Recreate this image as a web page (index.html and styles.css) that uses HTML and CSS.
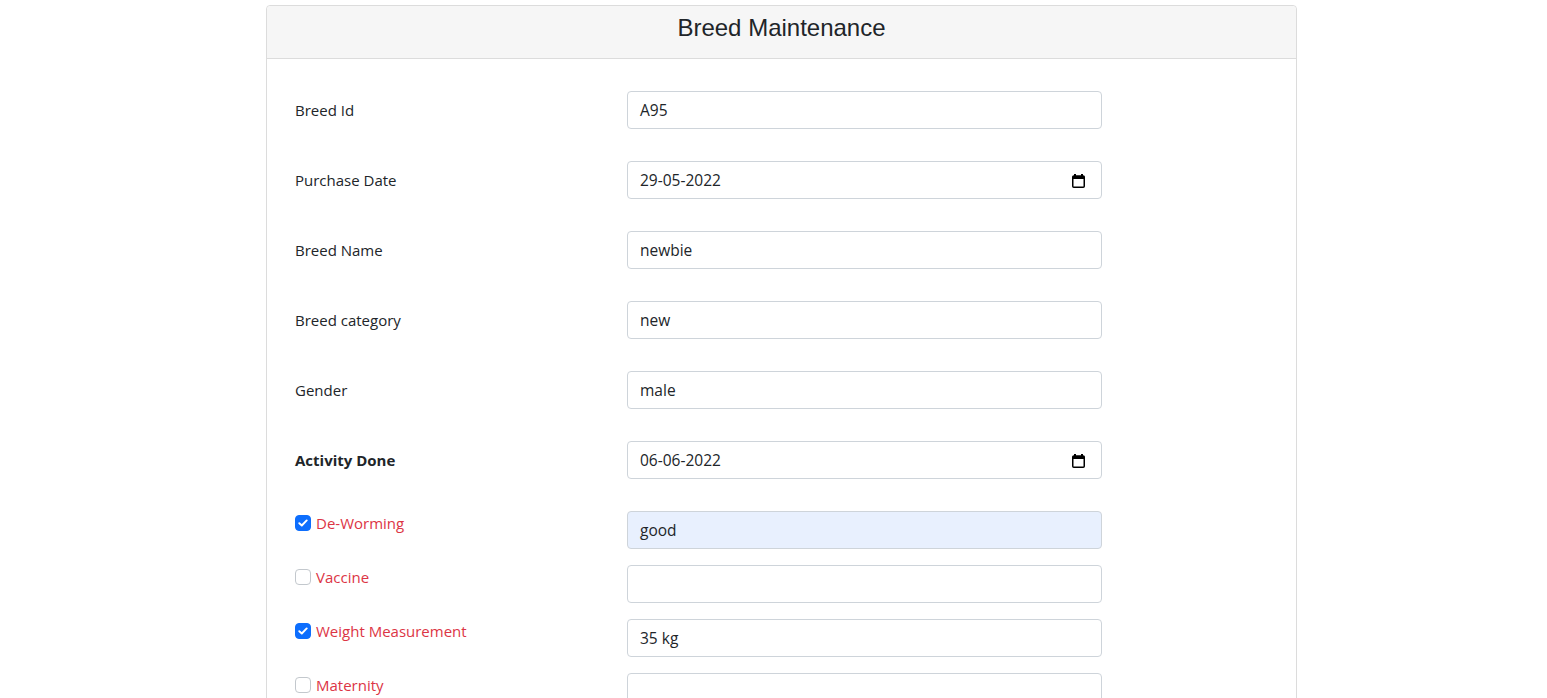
FILE: index.html
```html
<!DOCTYPE html>
<html>
<head>
<meta charset="utf-8">
<title>Breed Maintenance</title>
<link rel="stylesheet" href="styles.css">
</head>
<body>
<div class="page">
  <div class="card">
    <div class="card-header"><h3 class="title">Breed Maintenance</h3></div>
    <div class="card-body">
      <div class="row">
        <label class="label">Breed Id</label>
        <div class="field"><span class="value">A95</span></div>
      </div>
      <div class="row">
        <label class="label">Purchase Date</label>
        <div class="field"><span class="value">29-05-2022</span>
          <svg class="cal" width="13" height="14" viewBox="0 0 13 14"><rect x="2" y="0" width="2" height="2.5" fill="#000"/><rect x="9" y="0" width="2" height="2.5" fill="#000"/><rect x="0.75" y="2" width="11.5" height="11.25" rx="1" fill="none" stroke="#000" stroke-width="1.5"/><rect x="0.75" y="2" width="11.5" height="3" fill="#000"/></svg>
        </div>
      </div>
      <div class="row">
        <label class="label">Breed Name</label>
        <div class="field"><span class="value">newbie</span></div>
      </div>
      <div class="row">
        <label class="label">Breed category</label>
        <div class="field"><span class="value">new</span></div>
      </div>
      <div class="row">
        <label class="label">Gender</label>
        <div class="field"><span class="value">male</span></div>
      </div>
      <div class="row">
        <label class="label bold">Activity Done</label>
        <div class="field"><span class="value">06-06-2022</span>
          <svg class="cal" width="13" height="14" viewBox="0 0 13 14"><rect x="2" y="0" width="2" height="2.5" fill="#000"/><rect x="9" y="0" width="2" height="2.5" fill="#000"/><rect x="0.75" y="2" width="11.5" height="11.25" rx="1" fill="none" stroke="#000" stroke-width="1.5"/><rect x="0.75" y="2" width="11.5" height="3" fill="#000"/></svg>
        </div>
      </div>
      <div class="row check-row">
        <label class="check-label"><span class="box checked"><svg width="10" height="8" viewBox="0 0 10 8"><path d="M1.3 4.2 L3.8 6.5 L8.7 1.4" fill="none" stroke="#fff" stroke-width="1.9" stroke-linecap="round" stroke-linejoin="round"/></svg></span><span class="check-text">De-Worming</span></label>
        <div class="field autofill"><span class="value">good</span></div>
      </div>
      <div class="row check-row">
        <label class="check-label"><span class="box"></span><span class="check-text">Vaccine</span></label>
        <div class="field"><span class="value"></span></div>
      </div>
      <div class="row check-row">
        <label class="check-label"><span class="box checked"><svg width="10" height="8" viewBox="0 0 10 8"><path d="M1.3 4.2 L3.8 6.5 L8.7 1.4" fill="none" stroke="#fff" stroke-width="1.9" stroke-linecap="round" stroke-linejoin="round"/></svg></span><span class="check-text">Weight Measurement</span></label>
        <div class="field"><span class="value">35 kg</span></div>
      </div>
      <div class="row check-row">
        <label class="check-label"><span class="box"></span><span class="check-text">Maternity</span></label>
        <div class="field"><span class="value"></span></div>
      </div>
    </div>
  </div>
</div>
</body>
</html>
```
FILE: styles.css
```css
html, body {
  margin: 0;
  padding: 0;
  background: #fff;
  overflow: hidden;
}
body {
  font-family: "Open Sans", "Noto Sans", sans-serif;
  font-size: 15px;
  color: #212529;
}
.page {
  padding: 5px 0 0 266px;
}
.card {
  width: 1029px;
  border: 1px solid #dcdcdc;
  border-radius: 4px;
  background: #fff;
  min-height: 800px;
}
.card-header {
  background: #f6f6f6;
  border-bottom: 1px solid #dcdcdc;
  border-radius: 4px 4px 0 0;
  height: 53px;
  box-sizing: border-box;
  padding-top: 8px;
  text-align: center;
}
.title {
  margin: 0;
  font-family: "Liberation Sans", Arial, sans-serif;
  font-weight: 400;
  font-size: 24px;
  line-height: 28px;
  color: #212529;
}
.card-body {
  padding: 32px 28px;
}
.row {
  display: grid;
  grid-template-columns: 332px 475px;
  align-items: center;
  margin-bottom: 32px;
}
.row.check-row {
  align-items: start;
  margin-bottom: 16px;
}
.label {
  line-height: 24px;
}
.label.bold {
  font-weight: 700;
}
.field {
  height: 38px;
  box-sizing: border-box;
  border: 1px solid #ced4da;
  border-radius: 4px;
  background: #fff;
  padding: 0 16px 0 12px;
  display: flex;
  align-items: center;
  justify-content: space-between;
  font-size: 15.5px;
}
.field.autofill {
  background: #e8f0fe;
}
.value {
  line-height: 24px;
}
.cal {
  display: block;
  margin-top: 1px;
}
.check-label {
  display: flex;
  align-items: center;
  line-height: 24px;
  color: #dc3545;
}
.box {
  width: 16px;
  height: 16px;
  box-sizing: border-box;
  border: 1px solid #c3c8cd;
  border-radius: 4px;
  background: #fff;
  margin-right: 5px;
  display: flex;
  align-items: center;
  justify-content: center;
}
.box.checked {
  background: #0d6efd;
  border-color: #0d6efd;
}
.box svg {
  display: block;
}
```
